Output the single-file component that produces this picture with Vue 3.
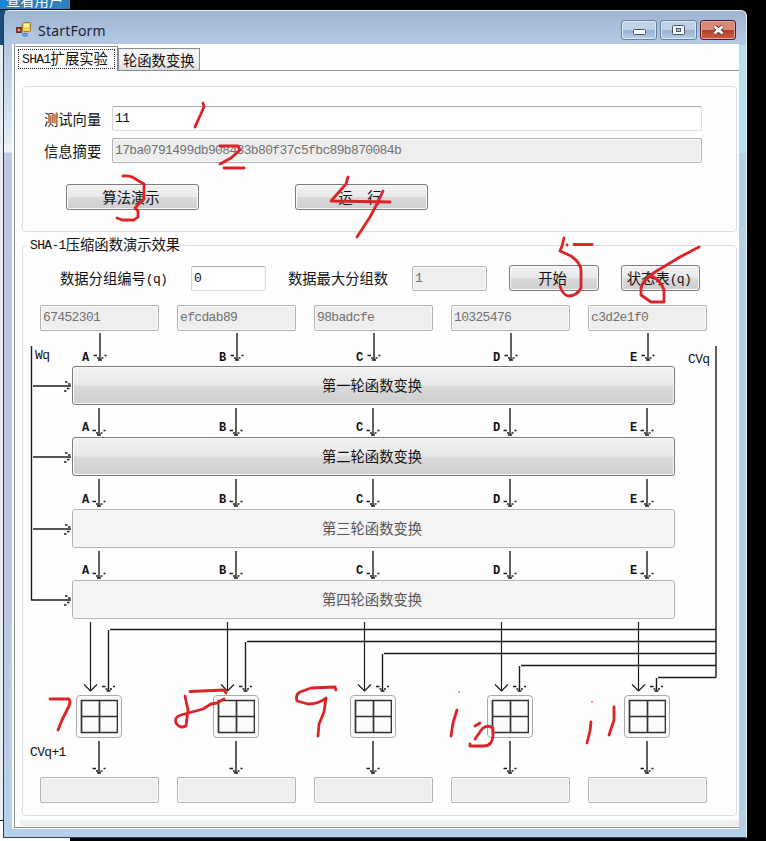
<script setup>
const registers = [
  { name: 'A', value: '67452301' },
  { name: 'B', value: 'efcdab89' },
  { name: 'C', value: '98badcfe' },
  { name: 'D', value: '10325476' },
  { name: 'E', value: 'c3d2e1f0' },
]
const rounds = [
  { title: '第一轮函数变换', enabled: true },
  { title: '第二轮函数变换', enabled: true },
  { title: '第三轮函数变换', enabled: false },
  { title: '第四轮函数变换', enabled: false },
]
const step = 137
const downArrows = registers.flatMap((_, i) => [
  { x: 100 + i * step, y1: 333, y2: 360 },
  { x: 99 + i * step, y1: 408, y2: 435 },
  { x: 99 + i * step, y1: 479, y2: 506 },
  { x: 99 + i * step, y1: 551, y2: 578 },
  { x: 99 + i * step, y1: 741, y2: 773 },
])
const feeds = registers.map((_, i) => ({ x: 108 + i * step, y: 629 + i * 12 }))
const inputs = [386, 457, 529, 600]
const marks = [
  'M203 103L204 107L199 118L195 127',
  'M220 146H238L240 150L231 158L220 164M224 168H244',
  'M123 176Q131 175 137 180L144 184V199L135 208L138 211V217L134 220H122L117 218',
  'M348 177L346 184L331 201L390 202M383 191L377 204L370 217L357 237',
  'M564 238L562 246L560 251L571 256Q581 263 581 271V288Q577 296 568 296Q562 294 560 286M574 244.500H592M567 245V245',
  'M699 247L680 257L655 272Q641 282 641 289V295L651 302H664V290Q661 281 652 276',
  'M50 699H69Q71 702 69 706L62 720L58 730',
  'M190 691.500L224 690L226 693M185 696L188 710L186 726Q180 729 176 723Q174 717 181 715L203 709L211 704L217 703L224 699',
  'M336 690L335 687L311 688L300 692Q295 695 297 701L308 704Q319 704 326 698L324 712L319 724L318 736',
  'M457 710L453 723L451 736M475 726L480 723M475 739L482 729Q487 724 493 728V736Q492 746 484 746H470V744',
  'M591 722L590 731L587 743M614 707V720L609 735',
]
</script>

<template>
  <div class="desktop">
    <div class="behind-tab">查看用户</div>
    <div class="behind-side"></div>
    <main class="window">
      <header class="titlebar">
        <svg class="app-icon" width="16" height="17" viewBox="0 0 16 17">
          <rect x="6.500" y="1.500" width="8" height="9" rx="1" fill="#f4d354" stroke="#9a7a22" />
          <path d="M8 3h5v3H8z" fill="#fff0a8" />
          <rect x=".7" y="6.500" width="4.500" height="5" fill="#a83c26" stroke="#682314" />
          <path d="M2 8h2v2h-2z" fill="#f4b49c" />
          <rect x="6.500" y="12.500" width="5" height="2.500" rx="1" fill="#68a5dc" stroke="#4b7fb4" />
        </svg>
        <span class="title">StartForm</span>
        <div class="controls">
          <span class="ctl"><svg width="34" height="18"><rect x="11.500" y="8.500" width="12" height="5" rx="1" fill="#fff" stroke="#475767" /></svg></span>
          <span class="ctl"><svg width="34" height="18"><rect x="11.500" y="4.500" width="12" height="9" rx="1" fill="#fff" stroke="#475767" /><rect x="15.500" y="7.500" width="4" height="3" fill="#b2cae0" stroke="#475767" /></svg></span>
          <span class="ctl close"><svg width="34" height="18"><path d="M13.500 5.500l8 7M21.500 5.500l-8 7" stroke="#5b3434" stroke-width="4.500" /><path d="M13.500 5.500l8 7M21.500 5.500l-8 7" stroke="#fff" stroke-width="2.800" /></svg></span>
        </div>
      </header>
      <section class="client">
        <nav class="tabs">
          <span class="tab active"><span class="focus"><i>SHA1</i>扩展实验</span></span>
          <span class="tab">轮函数变换</span>
        </nav>

        <section class="group form">
          <div class="form-row"><label>测试向量</label><div class="field wide on"><i>11</i></div></div>
          <div class="form-row"><label>信息摘要</label><div class="field wide"><i>17ba0791499db908433b80f37c5fbc89b870084b</i></div></div>
          <div class="actions">
            <button class="btn">算法演示</button>
            <button class="btn run">运　行</button>
          </div>
        </section>

        <section class="group demo">
          <h2 class="legend"><i>SHA-1</i>压缩函数演示效果</h2>
          <div class="block-row">
            <label class="l1">数据分组编号<i>(q)</i></label>
            <div class="field small on"><i>0</i></div>
            <label class="l2">数据最大分组数</label>
            <div class="field small"><i>1</i></div>
            <button class="btn start">开始</button>
            <button class="btn state">状态表<i>(q)</i></button>
          </div>
          <div class="cells values">
            <div v-for="r in registers" :key="r.name" class="field reg"><i>{{ r.value }}</i></div>
          </div>
          <template v-for="(round, n) in rounds" :key="round.title">
            <div class="cells names" :class="'n' + n">
              <i v-for="r in registers" :key="r.name">{{ r.name }}</i>
            </div>
            <button class="btn round" :disabled="!round.enabled">{{ round.title }}</button>
          </template>
          <div class="cells adders">
            <div v-for="r in registers" :key="r.name" class="adder">
              <svg width="38" height="36"><path d="M1.500 1.500h36v32h-36zM19.500 1v33M1 17.500h37" fill="none" stroke="#333" stroke-width="1.700" /></svg>
            </div>
          </div>
          <div class="next"><i>CVq+1</i></div>
          <div class="cells outputs">
            <div v-for="r in registers" :key="r.name" class="field reg"></div>
          </div>
        </section>
        <div class="status"></div>
      </section>
    </main>

    <svg class="overlay" width="766" height="841" viewBox="0 0 766 841">
      <g fill="none" stroke="#1c1c1c" stroke-width="1.400">
        <path d="M31.500 346V600M716 346V677.500" />
        <g v-for="y in inputs" :key="y">
          <path :d="`M33 ${y}H71`" />
          <path :d="`M65 ${y - 4}h2.500M68 ${y - 2}h2.500M67 ${y + 2.500}h2.500M64 ${y + 5}h2.500`" />
        </g>
        <path d="M31 600H34" />
        <g v-for="(a, k) in downArrows" :key="k">
          <path :d="`M${a.x} ${a.y1}V${a.y2}`" />
          <path :d="`M${a.x - 6.500} ${a.y2 - 4.500}h3.500M${a.x - 3} ${a.y2 - 2}h2M${a.x - 2} ${a.y2}h4M${a.x + 1.500} ${a.y2 - 2}h2M${a.x + 4.500} ${a.y2 - 4.500}h2`" />
        </g>
        <g v-for="(f, k) in feeds" :key="'f' + k">
          <path :d="`M716 ${f.y + .5}H${f.x + 2}M${f.x + .5} ${f.y + 1}V691`" />
          <path :d="`M${f.x - 6} 686.500h3.500M${f.x - 2.500} 689h2M${f.x - 1.500} 691h4M${f.x + 2} 689h2M${f.x + 5} 686.500h2`" />
          <path :d="`M${f.x - 17.500} 622V691M${f.x - 24} 684.500l6.500 6.500l6.500 -6.500`" stroke-width="1.200" />
        </g>
      </g>
      <text class="lbl" x="35" y="359">Wq</text>
      <text class="lbl" x="688" y="363">CVq</text>
      <g fill="none" stroke="#dc2328" stroke-width="2.800" stroke-linecap="round" stroke-linejoin="round">
        <path v-for="m in marks" :key="m" :d="m" />
      </g>
      <circle cx="459" cy="692" r=".8" fill="#dc2328" />
      <circle cx="592" cy="702" r=".8" fill="#dc2328" />
    </svg>
  </div>
</template>

<style>
body { margin: 0; background: #000; }
</style>

<style scoped>
* { box-sizing: border-box; }
.desktop {
  position: relative; width: 766px; height: 841px; padding: 10px 0 0 3px;
  overflow: hidden; background: #000; color: #111;
  font: 14.3px/16px "Noto Sans CJK SC", sans-serif;
}
i { font-family: "Liberation Mono", monospace; font-style: normal; font-size: 13px; letter-spacing: -.65px; line-height: 12px; vertical-align: 1px; }
.behind-tab {
  position: absolute; left: 0; top: 0; width: 70px; height: 9px; overflow: hidden;
  padding-left: 6px; line-height: 0; background: #2d82bd; color: #fff;
}
.behind-side {
  position: absolute; left: 0; top: 10px; width: 70px; height: 831px;
  background: linear-gradient(#164d79 35px, #e9eef2 35px 810px, #000 810px 811px, #fff 811px);
}
.window {
  position: relative; width: 744px; height: 828px;
  border: 1px solid #e6f2fb; border-left: 1px solid #333a45; border-bottom-color: #2c4456; border-radius: 6px 6px 0 0;
  background:
    linear-gradient(90deg, transparent 730px, #b3d0ea 730px) 0 142px no-repeat,
    linear-gradient(90deg, transparent 730px, #b5e0f4 734px) 0 34px / 100% 108px no-repeat,
    linear-gradient(#9fb6d2 0, #b3c8e2 34px, #dde9f5 120px, #eef4fa 141px, #bcc8e6 142px, #bcc8e6 600px, #b5d0ea 828px);
}
.titlebar { display: flex; height: 33px; padding: 10px 10px 0 12px; align-items: flex-start; border-radius: 6px 6px 0 0; background: linear-gradient(#9db3d0, #b4cae4); }
.title { margin: 2px 0 0 6px; font: 14px/16px "Noto Sans", sans-serif; letter-spacing: .2px; color: #1c2430; }
.controls { display: flex; gap: 3px; margin-left: auto; margin-top: -1px; }
.ctl { width: 36.500px; height: 20px; border: 1px solid #65809f; border-radius: 3px; box-shadow: inset 0 0 0 1px #dce9f6; background: linear-gradient(#bfd2e8 50%, #98b2d0 50%, #b6cce4); }
.ctl svg { display: block; }
.close { border-color: #4b1a22; box-shadow: inset 0 0 0 1px #e6aa9c; background: linear-gradient(#d9897a 48%, #b73b26 50%, #cc5e45); }
.client { display: flex; flex-direction: column; width: 727px; height: 785px; margin-left: 8px; padding-left: 2px; border-left: 1px solid #fff; background: linear-gradient(90deg, #fff 1px, #8d929a 1px 2px, #fefefe 2px); border-bottom: 1px solid #fff; }
.tabs { display: flex; align-items: flex-end; height: 27px; border-bottom: 1px solid #8b8d92; }
.tab { height: 22px; width: 82px; border: 1px solid #8b8d92; border-bottom: 0; padding-left: 4px; line-height: 22px; white-space: nowrap; background: linear-gradient(#f3f3f3 50%, #dedede); }
.tab.active { width: 103px; height: 25px; margin-bottom: -1px; padding: 2px; background: #fff; border-left-color: #fff; }
.focus { display: block; height: 20px; border: 1px dotted #222; line-height: 16px; padding-left: 3px; }
.group { width: 715px; margin-left: 7px; border: 1px solid #dcdfe1; border-radius: 4px; }
.form { height: 146px; margin-top: 15px; padding: 19px 0 0 21px; flex: none; }
.form-row { display: flex; align-items: center; height: 25px; margin-bottom: 7px; }
.form-row label { width: 68px; }
.field { height: 25px; border: 1px solid #b0b1b3; border-radius: 2px; background: #eee; box-shadow: inset 0 0 0 1px #fafafa; padding: 2px 2px; color: #707070; line-height: 15px; white-space: nowrap; }
.field.on { background: #fff; color: #111; border-color: #a9abae #d9dbde #dfe2e4 #d0d2d5; }
.wide { width: 590px; }
.actions { display: flex; gap: 96px; padding: 14px 0 0 22px; }
.btn { width: 133px; height: 26px; padding: 0 3px 1px 0; border: 1px solid #7b7b7b; border-radius: 3px; color: #111; font: inherit; background: linear-gradient(#f2f2f2, #e9e9e9 49%, #dadada 51%, #cecece); box-shadow: inset 0 0 0 1px #fafafa; }
.btn:disabled { background: #f4f4f4; border-color: #b2b2b2; color: #555; }
.demo { height: 571px; margin-top: 13px; flex: none; display: flex; flex-direction: column; padding-left: 17px; }
.legend { align-self: flex-start; flex: none; height: 16px; margin: -10px 0 0 -13px; padding: 0 2px 0 3px; background: #fefefe; font: inherit; }
.block-row { display: flex; align-items: center; height: 26px; margin-top: 13px; flex: none; }
.l1 { width: 151px; padding-left: 20px; }
.l2 { width: 146px; padding-left: 22px; }
.small { width: 75px; }
.start { width: 90px; margin-left: 22px; }
.state { width: 79px; margin-left: 22px; white-space: nowrap; }
.cells { display: grid; grid-template-columns: repeat(5, 137px); flex: none; }
.reg { width: 119px; height: 26px; }
.values { margin-top: 14px; }
.names { height: 32px; padding: 17px 0 0 42px; }
.n0 { height: 35px; padding-top: 21px; }
.n2 { height: 33px; padding-top: 18px; }
.names i { font-weight: 700; font-size: 12px; }
.round { flex: none; width: 603px; height: 39px; margin-left: 32px; padding-bottom: 2px; }
.adders { margin: 76px 0 0 36px; height: 44px; }
.adder { width: 46px; height: 43px; border: 1px solid #aaa; border-radius: 4px; padding: 3px; background: #fbfbfb; }
.adder svg { display: block; }
.next { height: 38px; margin-left: -10px; padding-top: 4px; }
.outputs .reg { border-color: #b2b2b2; }
.status { height: 6px; margin: 4px 0 0 5px; background: #eeeff0; border-bottom: 0; flex: none; }
.client::after { content: ""; height: 1px; flex: none; margin-top: auto; background: #888e94; }
.overlay { position: absolute; left: 0; top: 0; pointer-events: none; }
.lbl { font: 13px "Liberation Mono", monospace; letter-spacing: -.65px; fill: #111; }
</style>
